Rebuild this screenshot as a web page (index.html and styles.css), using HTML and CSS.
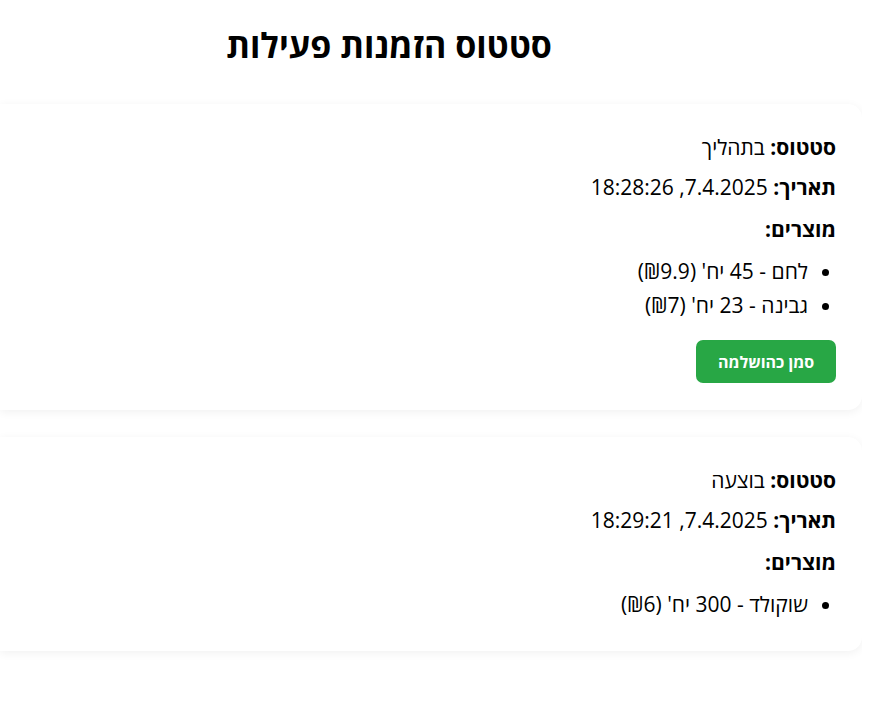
FILE: index.html
```html
<!DOCTYPE html>
<html lang="he" dir="rtl">
<head>
<meta charset="utf-8">
<title>סטטוס הזמנות פעילות</title>
<link rel="stylesheet" href="styles.css">
</head>
<body>
<div class="container">
  <h1 class="title">סטטוס הזמנות פעילות</h1>

  <div class="order-card">
    <p class="row"><strong>סטטוס:</strong> בתהליך</p>
    <p class="row"><strong>תאריך:</strong> 7.4.2025, 18:28:26</p>
    <p class="row heading"><strong>מוצרים:</strong></p>
    <ul class="items">
      <li>לחם - 45 יח' (₪9.9)</li>
      <li>גבינה - 23 יח' (₪7)</li>
    </ul>
    <button class="complete-btn">סמן כהושלמה</button>
  </div>

  <div class="order-card">
    <p class="row"><strong>סטטוס:</strong> בוצעה</p>
    <p class="row"><strong>תאריך:</strong> 7.4.2025, 18:29:21</p>
    <p class="row heading"><strong>מוצרים:</strong></p>
    <ul class="items">
      <li>שוקולד - 300 יח' (₪6)</li>
    </ul>
  </div>
</div>
</body>
</html>
```

FILE: styles.css
```css
html {
  background: #ffffff;
  overflow-x: hidden;
}

body {
  margin: 8px 8px 8px 0;
  font-family: "Open Sans", "Liberation Sans", sans-serif;
  color: #000;
  direction: rtl;
}

.container {
  display: flex;
  flex-direction: column;
}

.title {
  text-align: center;
  font-size: 34px;
  font-weight: 700;
  line-height: 40px;
  margin: 17px 0 39px;
  padding-right: 84px;
}

.order-card {
  background: #fff;
  border-radius: 0 14px 14px 0;
  box-shadow: 0 2px 10px rgba(0, 0, 0, 0.06);
  padding: 23px 26px 27px;
  margin-bottom: 27px;
}

.row {
  margin: 0;
  font-size: 21px;
  line-height: 40px;
}

.row strong {
  font-weight: 700;
}

.heading {
  margin-top: 2px;
}

.items {
  margin: 5px 0 3px;
  padding: 0 28px 0 0;
  font-size: 21px;
  line-height: 34px;
}

.complete-btn {
  display: block;
  margin-top: 18px;
  width: 140px;
  height: 43px;
  border: none;
  border-radius: 7px;
  background: #28a745;
  color: #fff;
  font-family: "Open Sans", "Liberation Sans", sans-serif;
  font-size: 16px;
  font-weight: 700;
  cursor: pointer;
}
```
